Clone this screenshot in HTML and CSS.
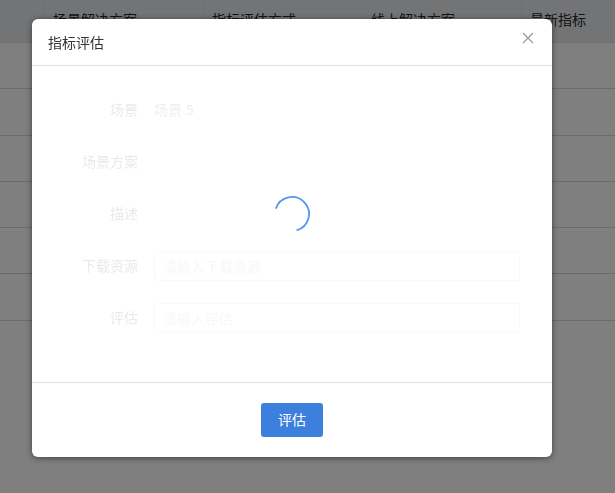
FILE: index.html
```html
<!DOCTYPE html>
<html lang="zh-CN">
<head>
<meta charset="utf-8">
<meta name="viewport" content="width=device-width, initial-scale=1">
<title>指标评估</title>
<link rel="stylesheet" href="styles.css">
</head>
<body>
<table class="metrics">
  <thead>
    <tr><th class="index-col"></th><th class="col">场景解决方案</th><th class="col">指标评估方式</th><th class="col">线上解决方案</th><th>最新指标</th></tr>
  </thead>
  <tbody>
    <tr><td></td><td></td><td></td><td></td><td></td></tr>
    <tr><td></td><td></td><td></td><td></td><td></td></tr>
    <tr><td></td><td></td><td></td><td></td><td></td></tr>
    <tr><td></td><td></td><td></td><td></td><td></td></tr>
    <tr><td></td><td></td><td></td><td></td><td></td></tr>
    <tr><td></td><td></td><td></td><td></td><td></td></tr>
  </tbody>
</table>

<div class="overlay">
  <section class="modal" role="dialog" aria-modal="true" aria-labelledby="modal-title">
    <header class="modal-header">
      <h1 class="modal-title" id="modal-title">指标评估</h1>
      <button class="close" type="button" aria-label="关闭">
        <svg width="12" height="12" viewBox="0 0 12 12" fill="none" stroke="currentColor" stroke-width="1.1"><path d="M1 1l10 10M11 1L1 11"/></svg>
      </button>
    </header>
    <div class="modal-body">
      <form class="form" id="evaluate-form">
        <div class="row"><span class="label">场景</span><span class="value">场景 5</span></div>
        <div class="row"><span class="label">场景方案</span><span class="value"></span></div>
        <div class="row"><span class="label">描述</span><span class="value"></span></div>
        <div class="row"><label class="label" for="resource">下载资源</label><input class="field" id="resource" type="text" placeholder="请输入下载资源"></div>
        <div class="row"><label class="label" for="score">评估</label><input class="field" id="score" type="text" placeholder="请输入评估"></div>
      </form>
      <div class="loading" role="status" aria-label="加载中">
        <svg width="36" height="36" viewBox="0 0 36 36" fill="none" stroke="currentColor" stroke-width="1.8"><path d="M1.9 12.6A17 17 0 1 1 22.6 34.4"/></svg>
      </div>
    </div>
    <footer class="modal-footer">
      <button class="primary" type="submit" form="evaluate-form">评估</button>
    </footer>
  </section>
</div>
</body>
</html>
```
FILE: styles.css
```css
* { box-sizing: border-box; }

body {
  margin: 0;
  background: #fff;
  color: #262626;
  font: 14px/20px "Noto Sans", "Noto Sans CJK SC", sans-serif;
}

button, input { font: inherit; }

.metrics {
  width: 100%;
  table-layout: fixed;
  border-collapse: separate;
  border-spacing: 0;
}

.metrics th {
  height: 43px;
  padding: 0 8px 2px;
  border-right: 1px solid #dfe1e4;
  border-bottom: 1px solid #dfe1e4;
  background: #e6e9ec;
  font-weight: 400;
  text-align: left;
}

.metrics th:last-child { border-right: 0; }
.metrics .index-col { width: 45px; }
.metrics .col { width: 159px; }

.metrics td {
  height: 46px;
  padding: 0;
  border-bottom: 1px solid #d4d4d4;
}

.metrics tbody tr:nth-child(4n + 2) td { height: 47px; }

.overlay {
  position: fixed;
  inset: 0;
  padding: 19px 63px 32px 32px;
  background: rgba(0, 0, 0, 0.5);
}

.modal {
  overflow: hidden;
  border-radius: 6px;
  background: #fff;
  box-shadow: 0 1px 6px rgba(0, 0, 0, 0.5);
}

.modal-header {
  display: flex;
  justify-content: space-between;
  align-items: flex-start;
  padding: 14px 16px 12px;
  border-bottom: 1px solid #dfdfdf;
}

.modal-title {
  margin: 0;
  color: #333;
  font-size: 14px;
  font-weight: 400;
}

.close {
  display: flex;
  margin-top: -3px;
  padding: 2px;
  border: 0;
  background: none;
  color: #969696;
}

.modal-body {
  position: relative;
  padding: 29px 32px 49px;
}

.form { opacity: 0.1; }

.row {
  display: flex;
  align-items: center;
  gap: 16px;
  height: 30px;
  margin-bottom: 22px;
}

.row:last-child { margin-bottom: 0; }

.label {
  flex: none;
  width: 74px;
  text-align: right;
}

.value { color: #595959; }

.field {
  flex: 1;
  min-width: 0;
  height: 30px;
  padding: 0 8px;
  border: 1px solid #c8cacd;
  border-radius: 3px;
  background: #fff;
}

.field::placeholder {
  color: #b8bbc0;
  opacity: 1;
}

.loading {
  position: absolute;
  inset: 0;
  display: flex;
  align-items: center;
  justify-content: center;
  padding-bottom: 20px;
  color: #5298f0;
}

.modal-footer {
  display: flex;
  justify-content: center;
  padding: 20px;
  border-top: 1px solid #dcdfe6;
}

.primary {
  height: 34px;
  padding: 0 17px;
  border: 0;
  border-radius: 3px;
  background: #3d7fdd;
  color: #fff;
}
```
